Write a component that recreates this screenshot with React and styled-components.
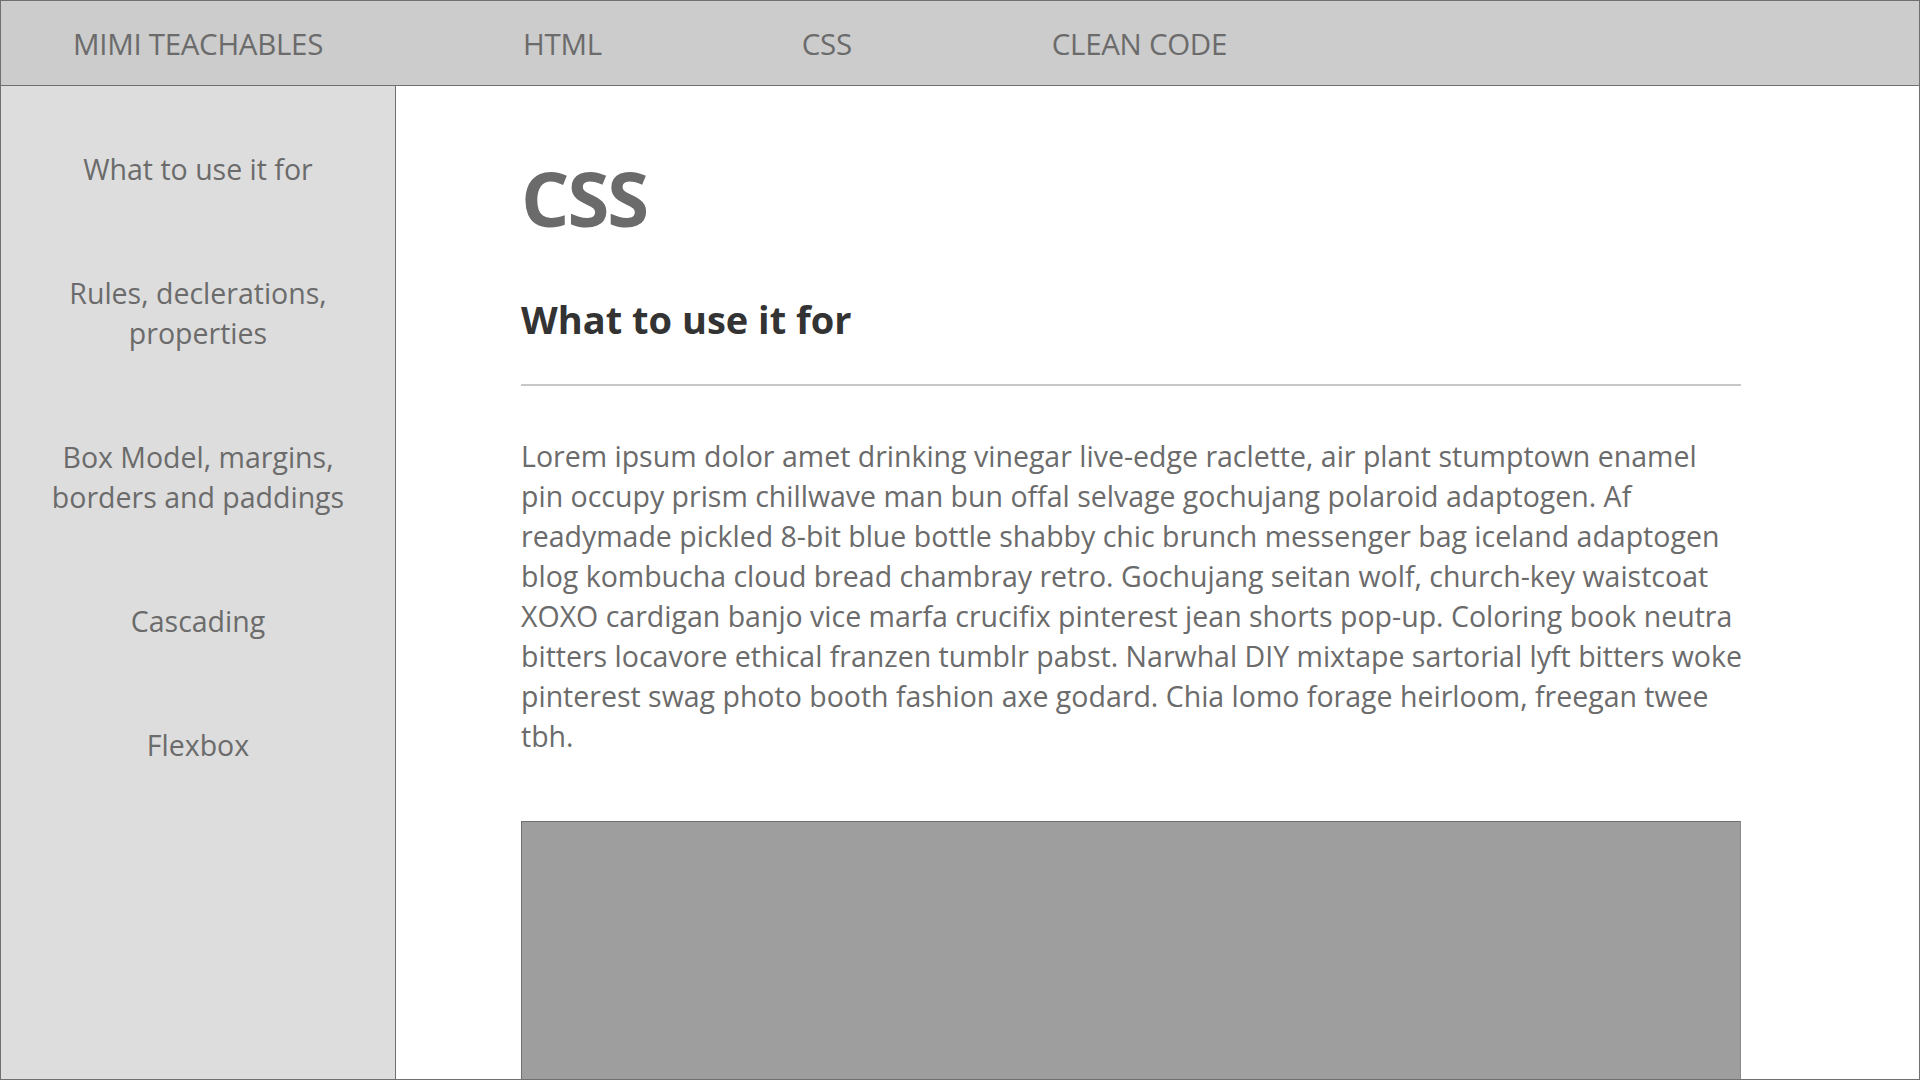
import React from "react";
import styled, { createGlobalStyle } from "styled-components";

const GlobalStyle = createGlobalStyle`
  html, body {
    margin: 0;
    padding: 0;
    height: 100%;
  }
  body {
    font-family: "Open Sans", "Noto Sans", sans-serif;
    background: #ffffff;
  }
  * {
    box-sizing: border-box;
  }
`;

const navItems = ["MIMI TEACHABLES", "HTML", "CSS", "CLEAN CODE"];

const sideItems = [
  ["What to use it for"],
  ["Rules, declerations,", "properties"],
  ["Box Model, margins,", "borders and paddings"],
  ["Cascading"],
  ["Flexbox"],
];

const loremLines = [
  "Lorem ipsum dolor amet drinking vinegar live-edge raclette, air plant stumptown enamel",
  "pin occupy prism chillwave man bun offal selvage gochujang polaroid adaptogen. Af",
  "readymade pickled 8-bit blue bottle shabby chic brunch messenger bag iceland adaptogen",
  "blog kombucha cloud bread chambray retro. Gochujang seitan wolf, church-key waistcoat",
  "XOXO cardigan banjo vice marfa crucifix pinterest jean shorts pop-up. Coloring book neutra",
  "bitters locavore ethical franzen tumblr pabst. Narwhal DIY mixtape sartorial lyft bitters woke",
  "pinterest swag photo booth fashion axe godard. Chia lomo forage heirloom, freegan twee",
  "tbh.",
];

const App = () => {
  return (
    <Page>
      <GlobalStyle />
      <TopBar>
        {navItems.map((item) => (
          <NavLink key={item}>{item}</NavLink>
        ))}
      </TopBar>
      <Body>
        <Sidebar>
          {sideItems.map((lines) => (
            <SideLink key={lines[0]}>
              {lines.map((line) => (
                <span key={line}>{line}</span>
              ))}
            </SideLink>
          ))}
        </Sidebar>
        <Main>
          <Title>CSS</Title>
          <Heading>What to use it for</Heading>
          <Rule />
          <Text>
            {loremLines.map((line) => (
              <Line key={line}>{line}</Line>
            ))}
          </Text>
          <ImageBox />
        </Main>
      </Body>
    </Page>
  );
};
export default App;

const Page = styled.div`
  width: 100%;
  height: 100vh;
  display: flex;
  flex-direction: column;
  border: 1px solid #707070;
  overflow: hidden;
`;

const TopBar = styled.div`
  height: 85px;
  flex-shrink: 0;
  display: flex;
  align-items: center;
  gap: 200px;
  padding-left: 72px;
  background-color: #cccccc;
  border-bottom: 1px solid #707070;
`;

const NavLink = styled.div`
  font-size: 29.5px;
  color: #6b6b6b;
  letter-spacing: -0.3px;
`;

const Body = styled.div`
  flex: 1;
  display: flex;
  min-height: 0;
`;

const Sidebar = styled.div`
  width: 395px;
  flex-shrink: 0;
  display: flex;
  flex-direction: column;
  align-items: center;
  gap: 84px;
  padding-top: 63px;
  background-color: #dddddd;
  border-right: 1px solid #707070;
`;

const SideLink = styled.div`
  display: flex;
  flex-direction: column;
  align-items: center;
  font-size: 28.5px;
  line-height: 40px;
  color: #6b6b6b;
  text-align: center;
`;

const Main = styled.div`
  flex: 1;
  display: flex;
  flex-direction: column;
  padding: 0 178px 0 125px;
  background-color: #ffffff;
  overflow: hidden;

  & > * {
    flex-shrink: 0;
  }
`;

const Title = styled.h1`
  margin: 74px 0 0 0;
  font-size: 76px;
  line-height: 1;
  font-weight: 700;
  color: #6b6b6b;
  letter-spacing: -2px;
`;

const Heading = styled.h2`
  margin: 61px 0 0 0;
  font-size: 38px;
  line-height: 1.2;
  font-weight: 700;
  color: #333333;
`;

const Rule = styled.div`
  height: 2px;
  margin-top: 41px;
  background-color: #c8c8c8;
`;

const Text = styled.p`
  margin: 50px 0 0 0;
  font-size: 28.5px;
  line-height: 40px;
  color: #6b6b6b;
`;

const Line = styled.span`
  display: block;
  white-space: nowrap;
`;

const ImageBox = styled.div`
  margin-top: 65px;
  height: 600px;
  background-color: #9e9e9e;
  border: 1px solid #707070;
  border-right-color: #8a8a8a;
`;
